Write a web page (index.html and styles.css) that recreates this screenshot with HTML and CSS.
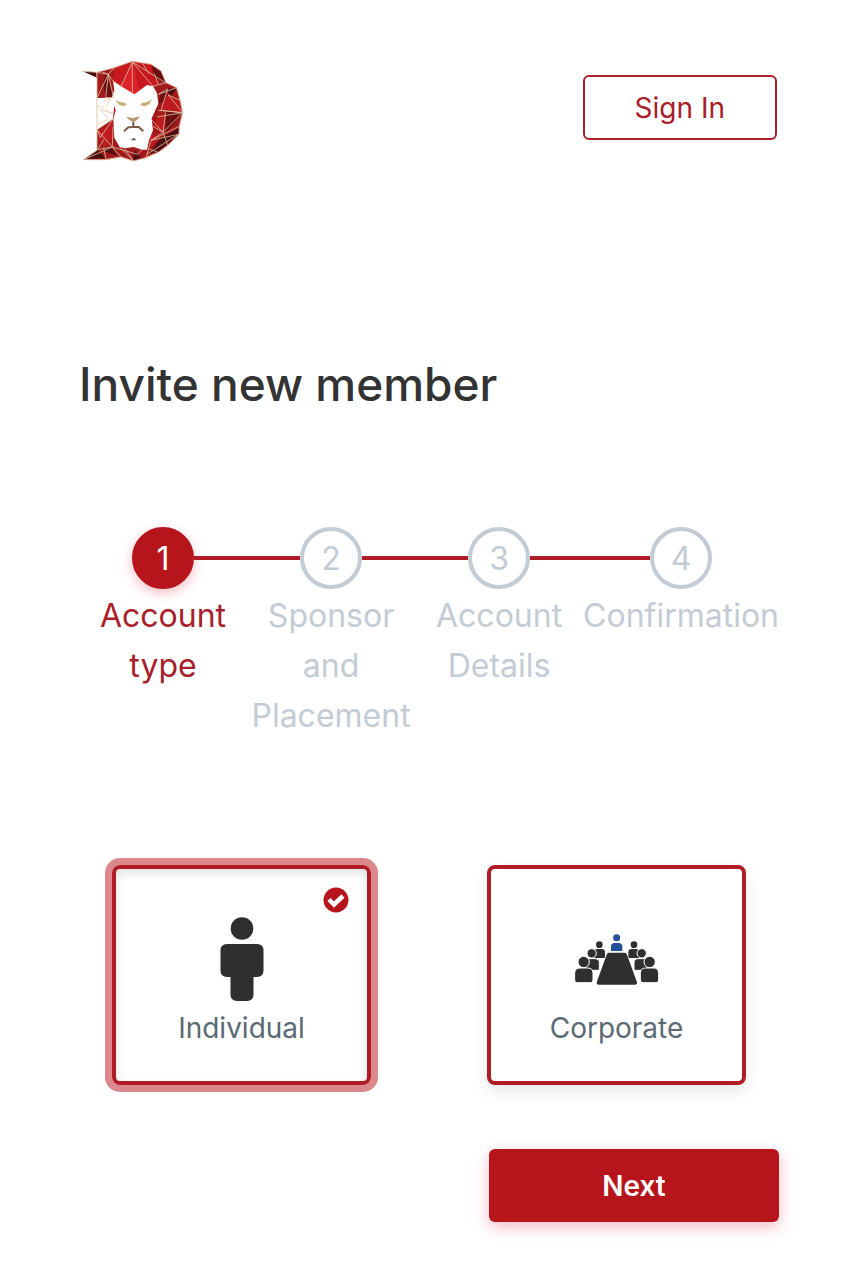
FILE: index.html
```
<!DOCTYPE html>
<html lang="en">
<head>
<meta charset="UTF-8">
<meta name="viewport" content="width=device-width, initial-scale=1.0">
<title>Invite new member</title>
<link rel="stylesheet" href="styles.css">
</head>
<body>

<header class="header">
  <a href="#" class="logo" aria-label="Home">
    <svg width="105" height="105" viewBox="24 26 315 315" stroke-linejoin="round">
      <!-- mane -->
      <path fill="#a31a1c" d="M34 63L78 66L130 52L184 33L240 42L270 62L285 97L317 112L327 150L335 187L325 228L324 252L292 284L262 306L225 322L188 332L150 320L105 328L38 328L78 300V66Z"/>
      <path fill="#c8191e" d="M130 52L184 35L240 42L262 100L190 132L126 92Z"/>
      <path fill="#df2227" d="M184 35L205 120L190 132L150 108Z"/>
      <path fill="#6a1013" d="M104 64L128 140H104L96 100ZM242 44L270 62L283 97L250 82ZM285 182L335 187L284 250ZM270 130L285 116L292 150L262 160Z"/>
      <path fill="#4b0d10" d="M38 327L80 298L104 324ZM94 300L120 290L138 318ZM270 262L324 234L322 252L262 304L234 310ZM284 116L317 114L300 138ZM35 63L76 66L78 82ZM190 300L210 322L186 330Z"/>
      <path fill="#bd1b20" d="M262 196L284 188L276 245L250 232ZM80 246L126 216L124 262L98 290ZM284 134L327 150L333 184L270 182ZM234 250L262 258L240 296Z"/>
      <path fill="#fff" d="M78 143L132 142L126 206L78 238Z"/>
      <!-- face -->
      <path fill="#fff" d="M126 92L148 106L190 132L228 104L246 108L258 128L262 160L242 204L246 240L234 270L228 298L212 298L188 290L162 294L146 290L130 262L127 208L134 180L122 142L130 120Z"/>
      <g fill="none" stroke="#dcbc9c" stroke-width="2.5">
        <path d="M34 63L78 66L130 52L184 33L240 42L270 62L285 97L317 112L327 150L335 187L325 228L324 252L292 284L262 306L225 322L188 332L150 320L105 328L38 328L78 300V66"/>
        <path d="M78 66L112 72L78 142M96 66L112 72L128 142H104L112 72L130 52M112 72L126 92L150 108L184 35V132M184 35L246 108M184 35L283 97M215 40L234 70M285 97L246 108M250 70L262 102"/>
        <path d="M317 112L262 132L290 116L270 180L335 187L292 134L327 150M262 180L335 187L258 200M284 186L276 246L240 206M335 187L276 246L246 228M325 228L240 270L276 246L290 284M240 270L225 322L262 306L234 296M240 270L322 252L228 312"/>
        <path stroke="#e3d3b4" d="M78 165L126 190L88 178L112 206L78 222M98 152L118 146L104 172"/>
        <path d="M78 238L126 206L88 262L78 238L124 290L38 328M126 230L124 290L80 298L98 268M124 290L150 320L105 328L98 292M146 290L188 332L162 296M124 290L200 312L212 298"/>
      </g>
      <!-- eyes, nose, mouth -->
      <path fill="#c9b077" d="M133 148L145 154L163 158L168 164L154 168L142 162ZM243 147L230 154L213 158L207 165L222 168L235 161Z"/>
      <path fill="#b49a6c" d="M165 199L186 203L208 198L198 209L187 216L175 209Z"/>
      <path fill="none" stroke="#7d5a48" stroke-width="6" d="M187 215V230M159 243L172 231L187 230L203 230L217 243"/>
      <path fill="#6e5648" d="M179 270L188 262L197 270Z"/>
    </svg>
  </a>
  <button type="button" class="btn btn-outline">Sign In</button>
</header>

<main>
  <h1>Invite new member</h1>

  <ol class="steps">
    <li class="step active">
      <div class="step-head"><span class="step-number">1</span></div>
      <div class="step-label">Account type</div>
    </li>
    <li class="step">
      <div class="step-head"><span class="step-number">2</span></div>
      <div class="step-label">Sponsor and Placement</div>
    </li>
    <li class="step">
      <div class="step-head"><span class="step-number">3</span></div>
      <div class="step-label">Account Details</div>
    </li>
    <li class="step">
      <div class="step-head"><span class="step-number">4</span></div>
      <div class="step-label">Confirmation</div>
    </li>
  </ol>

  <form id="inviteForm">
    <div class="cards">
      <div class="option">
        <input type="radio" id="individual" name="accountType" value="individual" checked>
        <label for="individual" class="card">
          <svg class="check" width="26" height="26" viewBox="0 0 26 26">
            <circle cx="13" cy="13" r="12.5" fill="#b5151b"/>
            <path d="M6 12.500L11 17.500L20 9" fill="none" stroke="#fff" stroke-width="4.500"/>
          </svg>
          <span class="card-icon">
            <svg width="44" height="84" viewBox="0 0 44 84" fill="#2f2f2f">
              <circle cx="22" cy="11.5" r="11.3"/>
              <path d="M7 27H37Q43.500 27 43.500 33.500V53.500Q43.500 60 37 60H33.500V77.500Q33.500 84 27 84H17Q10.500 84 10.500 77.500V60H7Q0.500 60 0.500 53.500V33.500Q0.500 27 7 27Z"/>
            </svg>
          </span>
          <span>Individual</span>
        </label>
      </div>
      <div class="option">
        <input type="radio" id="corporate" name="accountType" value="corporate">
        <label for="corporate" class="card">
          <svg class="check" width="26" height="26" viewBox="0 0 26 26">
            <circle cx="13" cy="13" r="12.5" fill="#b5151b"/>
            <path d="M6 12.500L11 17.500L20 9" fill="none" stroke="#fff" stroke-width="4.500"/>
          </svg>
          <span class="card-icon">
            <svg width="85" height="52" viewBox="27 20 255 156" fill="#2f2f2f">
              <defs>
                <g id="seats">
                  <circle cx="103" cy="55" r="10"/>
                  <path d="M88 95V77Q88 68 97 68H110Q120 68 120 78V91Q120 95 116 95Z"/>
                  <g stroke="#fff" stroke-width="3">
                    <circle cx="80" cy="81" r="14"/>
                    <path d="M62 132V107Q62 97 72 97H90Q103 97 103 109V127Q103 132 98 132Z"/>
                    <circle cx="56" cy="107" r="17"/>
                    <path d="M29 161V141Q29 125 45 125H68Q84 125 84 141V161Q84 169 76 169H37Q29 169 29 161Z"/>
                  </g>
                </g>
              </defs>
              <use href="#seats"/>
              <use href="#seats" transform="translate(310 0) scale(-1 1)"/>
              <path d="M132 79H178Q184 79 186 85L216 168Q217 175 211 175H100Q94 175 95 168L125 85Q127 79 132 79Z"/>
              <g fill="#24509a">
                <circle cx="155" cy="34" r="10.500"/>
                <path d="M138 74V61Q138 50 149 50H161Q172 50 172 61V74Z"/>
              </g>
            </svg>
          </span>
          <span>Corporate</span>
        </label>
      </div>
    </div>

    <div class="actions">
      <button type="submit" class="btn btn-primary">Next</button>
    </div>
  </form>
</main>

<script>
document.getElementById("inviteForm").addEventListener("submit", function(event) {
  event.preventDefault();
});
</script>

</body>
</html>
```
FILE: styles.css
```
* {
  box-sizing: border-box;
}
body {
  margin: 0;
  padding: 59px 79px;
  font-family: Inter, "Liberation Sans", sans-serif;
  background-color: #fff;
  color: #333;
}
.header {
  display: flex;
  justify-content: space-between;
  align-items: flex-start;
  padding-right: 2px;
}
.logo svg {
  display: block;
}
.btn {
  border-radius: 6px;
  font-family: inherit;
  font-size: 28px;
  cursor: pointer;
}
.btn-outline {
  margin-top: 16px;
  padding: 0 50px;
  height: 65px;
  border: 2px solid #a8202a;
  background-color: #fff;
  color: #a8202a;
}
.btn-primary {
  width: 290px;
  height: 73px;
  border: none;
  background-color: #b5151b;
  color: #fff;
  font-weight: 600;
  box-shadow: 0 5px 15px rgba(220,30,60,0.3);
}
h1 {
  margin: 190px 0 0;
  font-size: 46px;
  line-height: 60px;
  font-weight: 500;
}
.steps {
  display: grid;
  grid-template-columns: repeat(4, 1fr);
  margin: 113px 0 0;
  padding: 0;
  list-style: none;
  font-size: 32px;
  color: #c3ccd4;
}
.step {
  text-align: center;
}
.step-head {
  display: flex;
  align-items: center;
}
.step-head::before, .step-head::after {
  content: "";
  flex: 1;
  height: 4px;
  background-color: #b01c26;
}
.step:first-child .step-head::before, .step:last-child .step-head::after {
  background-color: transparent;
}
.step-number {
  width: 62px;
  height: 62px;
  border: 4px solid #c3ccd4;
  border-radius: 50%;
  line-height: 56px;
}
.step-label {
  padding-top: 2px;
  line-height: 50px;
}
.active {
  color: #a8202a;
}
.active .step-number {
  border-color: #b5151b;
  background-color: #b5151b;
  color: #fff;
  box-shadow: 0 4px 12px rgba(220,30,60,0.3);
}
.cards {
  display: grid;
  grid-template-columns: 1fr 1fr;
  gap: 116px;
  margin: 124px 33px 0;
}
.option {
  position: relative;
}
.option input {
  position: absolute;
  opacity: 0;
}
.card {
  display: flex;
  flex-direction: column;
  align-items: center;
  padding: 47px 0 33px;
  border: 4px solid #b01c26;
  border-radius: 8px;
  font-size: 28px;
  line-height: 40px;
  color: #5a6972;
  cursor: pointer;
  box-shadow: 0 6px 16px rgba(0,0,0,0.1);
}
.card-icon {
  display: flex;
  align-items: center;
  height: 86px;
  margin-bottom: 6px;
}
.check {
  display: none;
  position: absolute;
  top: 22px;
  right: 22px;
}
input:checked + .card {
  box-shadow: 0 0 0 7px #db888c, inset 0 4px 10px rgba(0,0,0,0.12);
}
input:checked + .card .check {
  display: block;
}
.actions {
  display: flex;
  justify-content: flex-end;
  margin-top: 64px;
}
```
